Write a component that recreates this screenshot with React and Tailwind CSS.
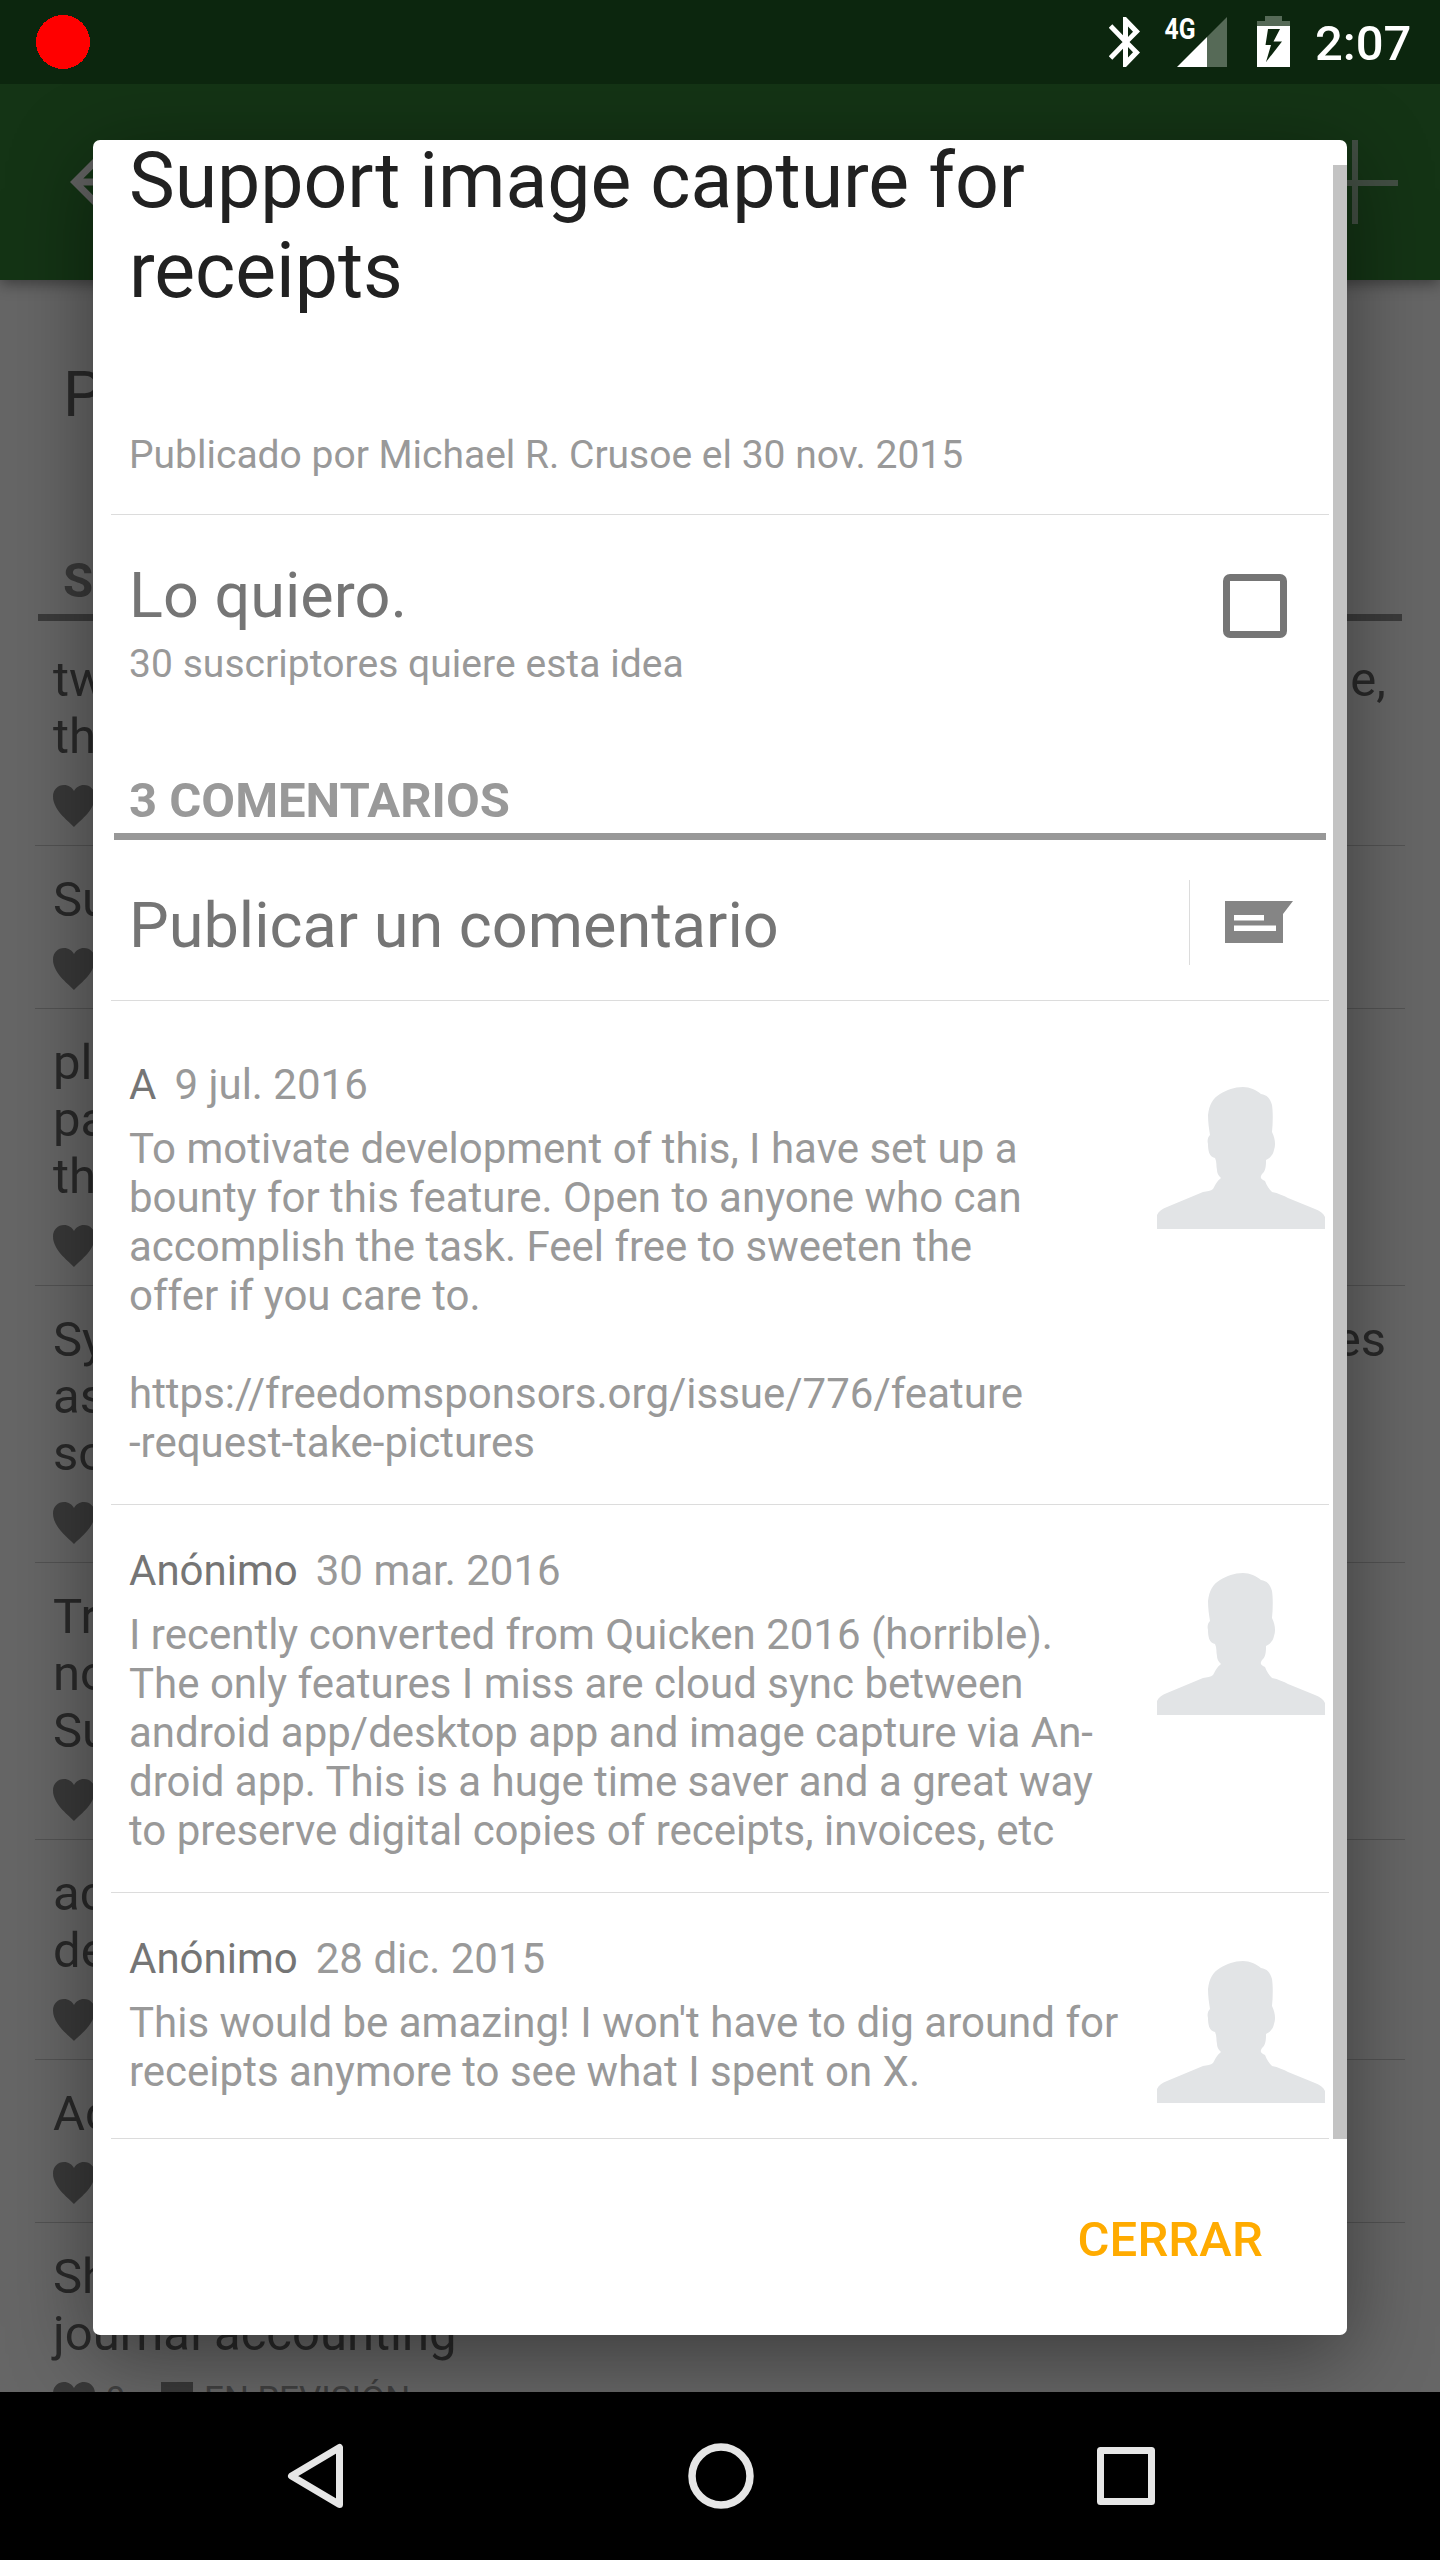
const ideas = [
  { lines: [["tw", "le,"], ["th"]] },
  { lines: [["Su"]] },
  { lines: [["pl"], ["pa"], ["th"]] },
  { lines: [["Sy", "es"], ["as"], ["so"]] },
  { lines: [["Tr"], ["no"], ["Su"]] },
  { lines: [["ac"], ["de"]] },
  { lines: [["Ac"]] },
  { lines: [["Sh"], ["journal accounting"]], votes: "9", status: "EN REVISIÓN" },
];

const comments = [
  {
    name: "A",
    date: "9 jul. 2016",
    lines: [
      "To motivate development of this, I have set up a",
      "bounty for this feature. Open to anyone who can",
      "accomplish the task. Feel free to sweeten the",
      "offer if you care to.",
      "",
      "https://freedomsponsors.org/issue/776/feature",
      "-request-take-pictures",
    ],
  },
  {
    name: "Anónimo",
    date: "30 mar. 2016",
    lines: [
      "I recently converted from Quicken 2016 (horrible).",
      "The only features I miss are cloud sync between",
      "android app/desktop app and image capture via An-",
      "droid app. This is a huge time saver and a great way",
      "to preserve digital copies of receipts, invoices, etc",
    ],
  },
  {
    name: "Anónimo",
    date: "28 dic. 2015",
    lines: [
      "This would be amazing! I won't have to dig around for",
      "receipts anymore to see what I spent on X.",
    ],
  },
];

function StatusBar() {
  return (
    <header className="relative z-20 flex h-[84px] shrink-0 items-start bg-[#0c260e] pl-9 text-white">
      <svg className="mt-[15px] size-[54px]" viewBox="0 0 54 54" shapeRendering="crispEdges">
        <circle cx="27" cy="27" r="27" fill="#ff0000" />
      </svg>
      <svg className="mt-[17px] ml-[1019px] h-[50px] w-[31px]" viewBox="0 0 31 50" fill="none">
        <path d="M1.500 9L17 25L1.500 41" stroke="#fff" strokeWidth="5" />
        <path d="M14 0H17L31 14.500L20.500 25L31 35.500L17 50H14ZM19 9.500V20L24 14.800ZM19 30V40.500L24 35.300Z" fill="#fff" fillRule="evenodd" />
      </svg>
      <svg className="mt-[15px] ml-6 h-[54px] w-[64px] overflow-visible" viewBox="0 0 64 54">
        <path d="M43 22L63 2V52H43Z" fill="#566a57" />
        <path d="M13 52L43 22V52Z" fill="#fff" />
        <text x="0.500" y="24" fontSize="30" fontWeight="700" fontFamily="Roboto" fill="#fff" textLength="31" lengthAdjust="spacingAndGlyphs">4G</text>
      </svg>
      <svg className="mt-[16px] ml-[29px] h-[51px] w-[33px]" viewBox="0 0 33 51">
        <path d="M8 0H25V5H33V10H0V5H8Z" fill="#566a57" />
        <path d="M0 10H33V51H0ZM11 13L8.500 29H14L9 46L25 25.500H16.500L23 13Z" fill="#fff" fillRule="evenodd" />
      </svg>
      <span className="mt-[15px] ml-[25px] text-[49px] leading-[57px] font-medium">2:07</span>
    </header>
  );
}

function Heart() {
  return (
    <svg className="h-[42px] w-[42px] shrink-0" viewBox="0 0 42 42" fill="#393939">
      <path d="M21 42C18 38 0 26 0 11.500C0 4.500 5 0 11 0C15.500 0 19 2.500 21 6C23 2.500 26.500 0 31 0C37 0 42 4.500 42 11.500C42 26 24 38 21 42Z" />
    </svg>
  );
}

function IdeaRow({ lines, votes, status }) {
  return (
    <li className="border-b border-[#535353] px-[18px] pt-[25px] pb-[18px]">
      {lines.map(([start, end], i) => (
        <p key={i} className="flex h-[57px] justify-between pr-px text-[49px] leading-[57px] whitespace-nowrap text-[#292929]">
          <span>{start}</span>
          {end && <span>{end}</span>}
        </p>
      ))}
      <div className="mt-5 flex h-[42px] items-start text-[35px] leading-[41px] text-[#404040]">
        <Heart />
        {votes && <span className="-mt-[3px] ml-[11px] w-[55px]">{votes}</span>}
        {status && <span className="h-8 w-8 bg-[#393939]" />}
        {status && <span className="-mt-[3px] ml-[11px]">{status}</span>}
      </div>
    </li>
  );
}

function IdeasPage() {
  return (
    <main className="flex h-[2308px] shrink-0 flex-col overflow-hidden bg-[#666666]">
      <div className="relative flex h-[196px] shrink-0 items-center justify-between bg-[#143415] pr-[42px] pl-14 shadow-[0_4px_14px_rgba(0,0,0,0.4)]">
        <svg className="size-[84px]" viewBox="0 0 24 24" fill="#636363">
          <path d="M20 11H7.800l5.600-5.600L12 4l-8 8 8 8 1.400-1.400L7.800 13H20v-2z" />
        </svg>
        <svg className="size-[84px]" viewBox="0 0 84 84" fill="#434f44">
          <path d="M38 0h6v40h40v6H44v38h-6V46H0v-6h38z" />
        </svg>
      </div>
      <h2 className="mt-[78px] shrink-0 pl-[63px] text-[63px] leading-[74px] text-[#292929]">P</h2>
      <h3 className="mx-[38px] mt-[120px] h-[69px] shrink-0 border-b-7 border-[#3b3b3b] pl-[25px] text-[49px] leading-[57px] font-bold text-[#393939]">S</h3>
      <ul className="mx-[35px] mt-[5px] shrink-0">
        {ideas.map((idea, i) => (
          <IdeaRow key={i} {...idea} />
        ))}
      </ul>
    </main>
  );
}

function Avatar() {
  return (
    <svg className="h-[142px] w-[168px] shrink-0" viewBox="0 0 168 142" fill="#e2e4e6">
      <path d="M0 142V128C2 124 5 122 10 120L46 105C50 104 54 104 56 102C59 97 60 94 64 91C61 88 60 86 60 83C59 79 60 75 58 71C52 70 51 63 51 57C50 53 51 50 53 48C52 42 51 35 51 28C52 18 56 11 63 7C70 3 77 0 86 0C93 0 99 3 104 7C110 8 113 11 115 18C116 25 116 35 115 45C118 51 119 58 117 63C116 68 113 71 109 73C109 78 109 84 105 87C103 90 103 92 108 94C110 99 112 102 115 105C121 106 127 109 131 111L158 122C163 124 166 126 168 130V142Z" />
    </svg>
  );
}

function Comment({ name, date, lines, first }) {
  return (
    <li className={`flex justify-between border-b border-[#dcdcdc] pr-1 pb-[35px] pl-[18px] ${first ? "pt-[59px]" : "pt-[41px]"}`}>
      <div className="pb-[2px] text-[42px] leading-[49px] whitespace-nowrap text-[#999999]">
        <p className="mb-[15px] flex gap-[18px]">
          <span className="text-[#757575]">{name}</span>
          <span>{date}</span>
        </p>
        {lines.map((line, i) => (
          <p key={i} className="h-[49px]">{line}</p>
        ))}
      </div>
      <div className="mt-[27px]">
        <Avatar />
      </div>
    </li>
  );
}

function IdeaDialog() {
  return (
    <section className="absolute top-[140px] left-[93px] z-10 flex h-[2195px] w-[1254px] flex-col overflow-hidden rounded-[7px] bg-white shadow-[0_20px_84px_rgba(0,0,0,0.42)]">
      <div className="flex h-[1999px] shrink-0">
        <div className="-mt-1 ml-[18px] w-[1218px]">
          <div className="h-[379px] border-b border-[#dcdcdc] pl-[18px]">
            <h1 className="text-[77px] leading-[90px] tracking-[-0.06px] text-[#212121]">
              Support image capture for
              <br />
              receipts
            </h1>
            <p className="mt-[116px] text-[39px] leading-[46px] text-[#999999]">Publicado por Michael R. Crusoe el 30 nov. 2015</p>
          </div>
          <div className="flex h-[257px] items-start justify-between pr-[42px] pl-[18px]">
            <div className="pt-[44px]">
              <p className="text-[63px] leading-[74px] text-[#757575]">Lo quiero.</p>
              <p className="mt-2 text-[39px] leading-[46px] tracking-[0.05px] text-[#999999]">30 suscriptores quiere esta idea</p>
            </div>
            <span className="mt-[59px] size-16 rounded-[7px] border-7 border-[#757575]" />
          </div>
          <h2 className="ml-[3px] h-[68px] w-[1212px] border-b-7 border-[#989898] pl-[15px] text-[49px] leading-[57px] font-bold text-[#999999]">3 COMENTARIOS</h2>
          <div className="flex h-[161px] items-start border-b border-[#dcdcdc] pl-[18px]">
            <p className="w-[1060px] pt-[49px] text-[63px] leading-[74px] text-[#757575]">Publicar un comentario</p>
            <span className="mt-10 h-[85px] w-px bg-[#dcdcdc]" />
            <svg className="mt-[61px] ml-[35px] h-[42px] w-[68px]" viewBox="0 0 68 42">
              <path d="M0 0H68L58 13V42H0Z" fill="#858585" />
              <path d="M9 14H39V19.500H9ZM9 24.500H51V30H9Z" fill="#fff" />
            </svg>
          </div>
          <ul>
            {comments.map((comment, i) => (
              <Comment key={i} first={i === 0} {...comment} />
            ))}
          </ul>
        </div>
        <span className="mt-[25px] ml-1 h-[1974px] w-[14px] bg-[#c3c3c3]" />
      </div>
      <footer className="flex grow justify-end pt-[72px] pr-[84px]">
        <button className="h-[57px] text-[49px] leading-[57px] font-medium tracking-[0.15px] text-[#ffab00]">CERRAR</button>
      </footer>
    </section>
  );
}

function NavigationBar() {
  return (
    <nav className="relative z-20 flex h-[168px] shrink-0 items-center justify-between bg-black pr-[285px] pl-[286px]">
      <svg className="h-[66px] w-[58px]" viewBox="0 0 58 66" fill="none" stroke="#e6e6e6" strokeWidth="7" strokeLinejoin="round">
        <path d="M5.500 33L53.500 4.500V61.500Z" />
      </svg>
      <svg className="size-[66px]" viewBox="0 0 66 66" fill="none" stroke="#e6e6e6" strokeWidth="7.500">
        <circle cx="33" cy="33" r="29" />
      </svg>
      <svg className="size-[58px]" viewBox="0 0 58 58" fill="none" stroke="#e6e6e6" strokeWidth="7" strokeLinejoin="round">
        <path d="M3.500 3.500H54.500V54.500H3.500Z" />
      </svg>
    </nav>
  );
}

export default function App() {
  return (
    <div className="relative flex h-[2560px] w-[1440px] flex-col overflow-hidden bg-black font-['Roboto',sans-serif]">
      <StatusBar />
      <IdeasPage />
      <NavigationBar />
      <IdeaDialog />
    </div>
  );
}
